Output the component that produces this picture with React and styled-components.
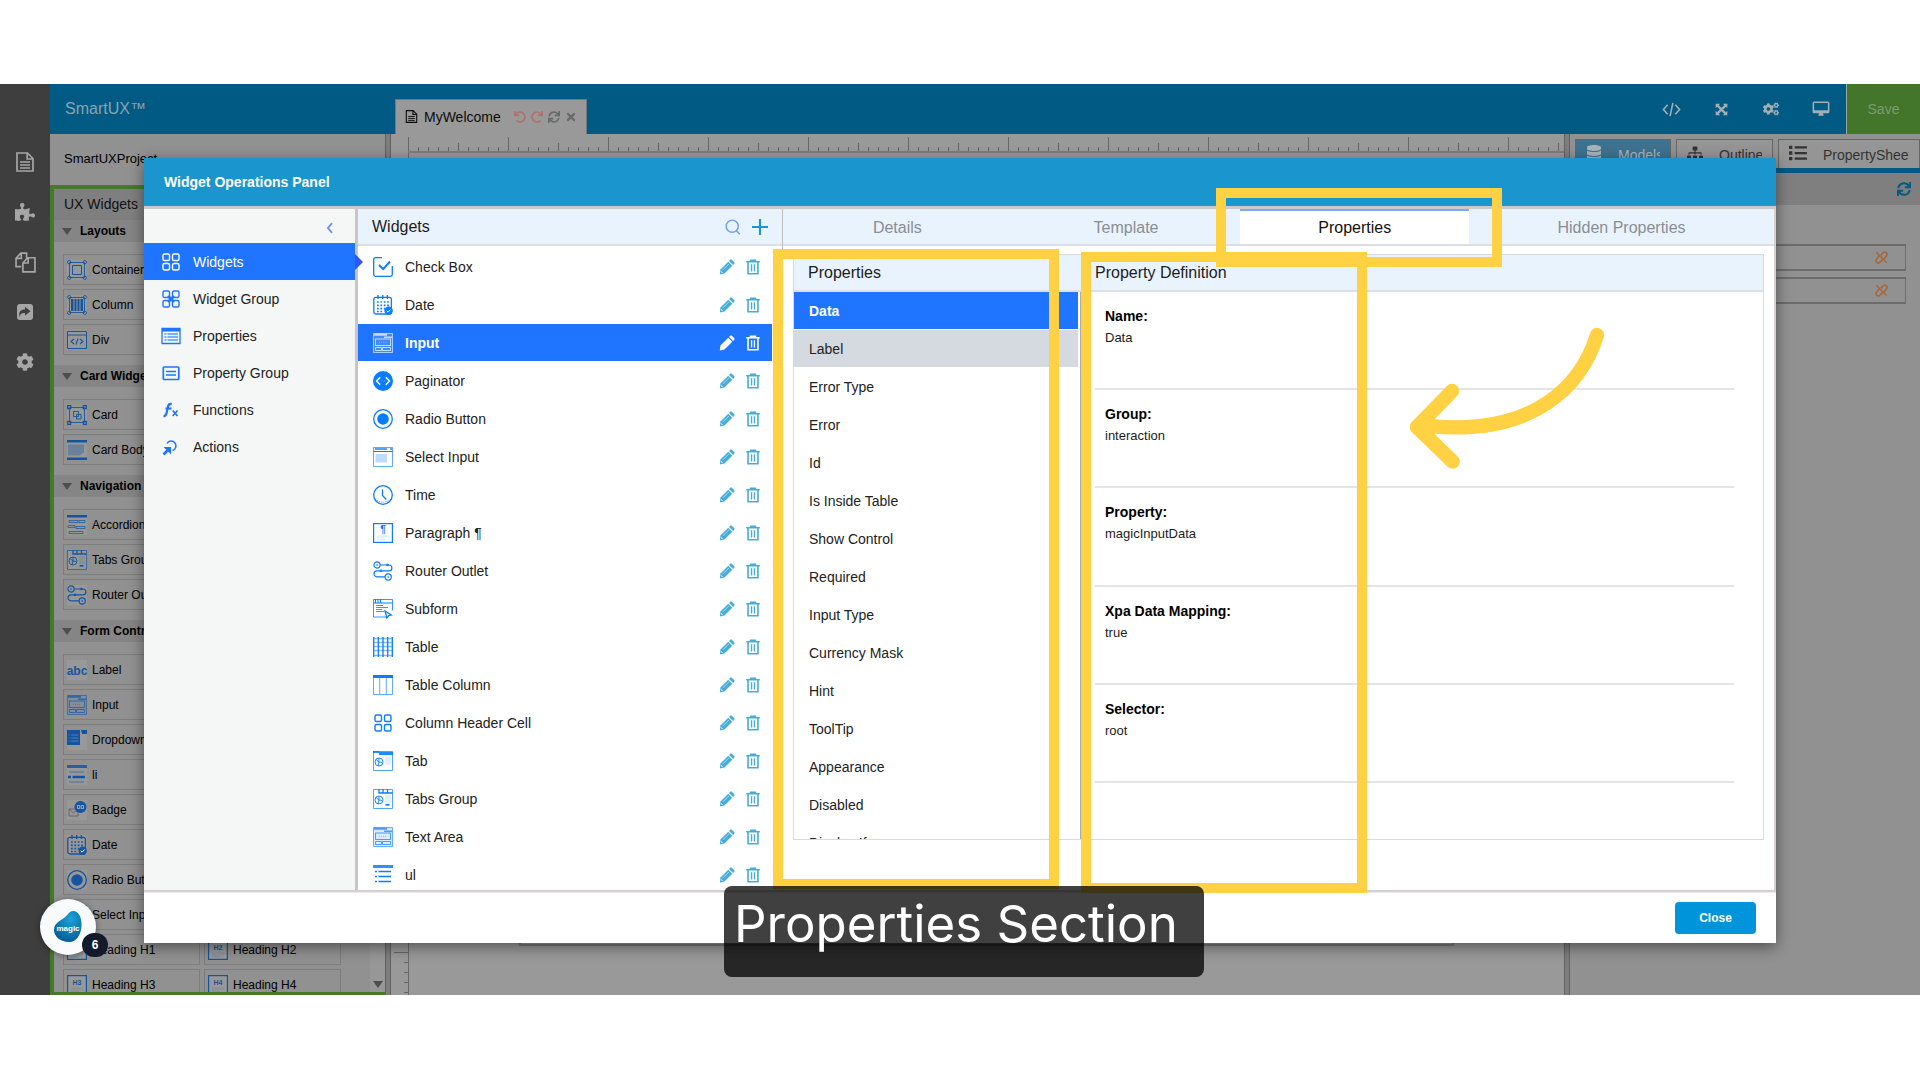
import React from 'react';
import styled, { createGlobalStyle, css } from 'styled-components';
import { FaPuzzlePiece, FaCog, FaCogs, FaSync, FaTimes, FaSitemap, FaDatabase, FaList, FaUndo, FaRedo } from 'react-icons/fa';

const BLUE = '#1f75ff';
const YELLOW = '#ffd143';

const Global = createGlobalStyle`
  *, *::before, *::after { box-sizing: border-box; }
  body { margin: 0; background: #fff; color: #000; font: 14px/18px "Liberation Sans", Arial, sans-serif; }
  button, input { font: inherit; color: inherit; }
  button { border: 0; padding: 0; background: none; cursor: pointer; }
  h1, h2, h3, p, ul, dl, dd, dt { margin: 0; padding: 0; font: inherit; }
  ul { list-style: none; }
  svg { display: block; flex: none; }
`;

const Page = styled.div`
  height: 100vh;
  padding: 84px 0 85px;
  display: flex;
`;
const Stage = styled.div`
  position: relative;
  flex: 1;
  min-width: 0;
  display: flex;
  background: #919191;
`;
const Rail = styled.nav`
  flex: 0 0 50px;
  background: #3e3e3e;
  color: #a6a6a6;
  padding-top: 53px;
  display: flex;
  flex-direction: column;
`;
const RailButton = styled.button`
  height: 50px;
  display: grid;
  place-items: center;
`;
const Main = styled.div`
  flex: 1;
  min-width: 0;
  display: flex;
  flex-direction: column;
`;
const TopBar = styled.header`
  flex: 0 0 50px;
  display: flex;
  background: #005a84;
  color: #a3aeb3;
`;
const Brand = styled.h1`
  flex: 0 0 345px;
  padding: 0 15px;
  font-size: 16px;
  line-height: 49px;
  color: #8ba3ae;
`;
const FileTab = styled.div`
  align-self: flex-end;
  height: 35px;
  padding: 0 9px 1px;
  display: flex;
  align-items: center;
  border: 1px solid #6f7b80;
  border-bottom: 0;
  background: #999;
  color: #0c0c0c;
`;
const FileName = styled.span`
  padding: 0 13px 0 6px;
`;
const TabActions = styled.div`
  display: flex;
  gap: 5px;
  color: #686868;
`;
const TabAction = styled.button`
  color: ${(p) => (p.$faded ? '#ae7272' : 'inherit')};
`;
const Tools = styled.div`
  margin-left: auto;
  display: flex;
`;
const Tool = styled.button`
  width: 50px;
  display: grid;
  place-items: center;
`;
const Save = styled.button`
  width: 74px;
  border-left: 1px solid #9aa8a0;
  background: #43752b;
  color: #7c9c6c;
`;
const Work = styled.div`
  flex: 1;
  min-height: 0;
  display: flex;
`;
const Palette = styled.aside`
  flex: 0 0 335px;
  display: flex;
  flex-direction: column;
  background: #919191;
`;
const Project = styled.div`
  flex: 0 0 51px;
  padding: 0 14px;
  font-size: 13px;
  line-height: 50px;
`;
const PaletteBody = styled.div`
  flex: 1;
  min-height: 0;
  display: flex;
  flex-direction: column;
  border: solid #457a2c;
  border-width: 4px 0 3px 4px;
`;
const PaletteTitle = styled.h2`
  flex: 0 0 31px;
  padding: 0 10px;
  line-height: 31px;
  background: #7f7f7f;
  color: #111;
`;
const PaletteScroll = styled.div`
  flex: 1;
  min-height: 0;
  overflow: hidden;
  display: flex;
`;
const PaletteGroups = styled.div`
  flex: 1;
  min-width: 0;
  font-size: 12px;
`;
const PaletteTrack = styled.div`
  flex: 0 0 15px;
  background: #979797;
  display: flex;
  align-items: flex-end;
  justify-content: center;
  padding-bottom: 4px;
`;
const Caret = styled.span`
  border: 5px solid transparent;
  border-top: 7px solid #4d4d4d;
  border-bottom: 0;
`;
const GroupTitle = styled.h3`
  height: 22px;
  padding: 0 8px;
  display: flex;
  align-items: center;
  gap: 8px;
  background: #858585;
  font-weight: bold;
`;
const GroupGrid = styled.ul`
  padding: 12px 9px 10px;
  display: grid;
  gap: 4px;
`;
const GroupRow = styled.li`
  display: grid;
  grid-template-columns: 137px 137px;
  gap: 4px;
`;
const PaletteItem = styled.button`
  height: 31px;
  padding: 0 3px;
  display: flex;
  align-items: center;
  gap: 5px;
  border: 1px solid #7d7d7d;
  text-align: left;
  white-space: nowrap;
  svg { color: #15559f; background: #989898; }
`;
const Splitter = styled.div`
  flex: 0 0 6px;
  background: #7d7d7d;
  border: solid #626262;
  border-width: 0 1px;
`;
const Canvas = styled.section`
  flex: 1;
  min-width: 0;
  display: flex;
  flex-direction: column;
  background: #999;
`;
const tick = '#666';
const RulerTop = styled.div`
  flex: 0 0 19px;
  margin-left: 17px;
  border-bottom: 2px solid #7c7c7c;
  background:
    repeating-linear-gradient(90deg, ${tick} 0 1px, transparent 1px 100px) 0 3px / 100% 14px no-repeat,
    repeating-linear-gradient(90deg, ${tick} 0 1px, transparent 1px 50px) 0 9px / 100% 8px no-repeat,
    repeating-linear-gradient(90deg, ${tick} 0 1px, transparent 1px 10px) 0 13px / 100% 4px no-repeat;
`;
const CanvasBody = styled.div`
  flex: 1;
  display: flex;
`;
const RulerLeft = styled.div`
  flex: 0 0 18px;
  border-right: 1px solid #6a6a6a;
  background:
    repeating-linear-gradient(180deg, transparent 0 99px, ${tick} 99px 100px) 3px 0 / 14px 100% no-repeat,
    repeating-linear-gradient(180deg, transparent 0 9px, ${tick} 9px 10px) 13px 0 / 4px 100% no-repeat;
`;
const Artboard = styled.div`
  flex: 1;
  margin: 16px 110px 49px;
  border: 2px solid #7a7a7a;
`;
const Inspector = styled.aside`
  flex: 0 0 350px;
  min-width: 0;
  background: #919191;
`;
const InspectorTabs = styled.div`
  padding: 5px 0 0 5px;
  display: grid;
  grid-template-columns: 96px 97px minmax(0, 1fr);
  gap: 5px;
  border-bottom: 5px solid #005a84;
`;
const InspectorTab = styled.button`
  min-width: 0;
  height: 29px;
  padding: 2px 10px 0;
  display: flex;
  align-items: center;
  gap: 16px;
  border: 1px solid #666;
  border-bottom: 0;
  background: ${(p) => (p.$active ? '#3f7290' : '#959595')};
  color: ${(p) => (p.$active ? '#a8b4bb' : '#333')};
  span { overflow: hidden; }
  svg { margin-bottom: 4px; }
`;
const InspectorBar = styled.div`
  height: 32px;
  padding: 0 9px;
  display: flex;
  align-items: center;
  justify-content: flex-end;
  background: #7f7f7f;
  color: #005a84;
`;
const Fields = styled.div`
  padding: 39px 14px 0 5px;
  display: grid;
  gap: 6px;
`;
const Field = styled.label`
  height: 27px;
  padding-right: 17px;
  display: flex;
  align-items: center;
  border: 1px solid #6c6c6c;
  border-width: 2px 1px;
  color: #a5683a;
  input { flex: 1; min-width: 0; border: 0; background: none; }
`;

const Modal = styled.section`
  position: absolute;
  inset: 74px 144px 52px;
  display: flex;
  flex-direction: column;
  background: #fff;
  box-shadow: 0 4px 14px rgba(0, 0, 0, 0.45);
`;
const ModalTitle = styled.h2`
  flex: 0 0 51px;
  padding: 0 20px;
  border-bottom: 3px solid #cdc8c9;
  background: #1a95ce;
  color: #fff;
  font-weight: bold;
  line-height: 48px;
`;
const ModalBody = styled.div`
  flex: 1;
  min-height: 0;
  display: flex;
  border: solid #d5cfd0;
  border-width: 0 2px 2px 0;
`;
const SideNav = styled.nav`
  flex: 0 0 214px;
  border-right: 3px solid #cac4c5;
  background: #f4f7f6;
`;
const CollapseRow = styled.div`
  height: 34px;
  padding: 4px 18px 0 0;
  display: flex;
  align-items: center;
  justify-content: flex-end;
  color: #6f8df5;
`;
const NavItem = styled.button`
  position: relative;
  width: 100%;
  height: 37px;
  padding-left: 17px;
  display: flex;
  align-items: center;
  gap: 12px;
  text-align: left;
  color: #222;
  svg { color: ${BLUE}; }
  ${(p) => p.$active && css`
    background: ${BLUE};
    color: #fff;
    svg { color: #fff; }
    &::after {
      content: '';
      position: absolute;
      left: 100%;
      top: 11px;
      border: 8px solid transparent;
      border-left-color: #2f55ff;
      border-right-width: 0;
    }
  `}
`;
const WidgetColumn = styled.section`
  flex: 0 0 425px;
  display: flex;
  flex-direction: column;
  border-right: 1px solid #bdbdbd;
`;
const barStyle = css`
  flex: none;
  height: 37px;
  border-bottom: 2px solid #dcdfe3;
  background: #e9f3fe;
  font-size: 16px;
  color: #1c1c1c;
`;
const WidgetBar = styled.header`
  ${barStyle}
  padding: 0 14px;
  display: flex;
  align-items: center;
  gap: 11px;
  h3 { flex: 1; }
`;
const BarAction = styled.button`
  color: ${(p) => (p.$strong ? '#1a95ce' : '#6aa0f0')};
`;
const WidgetList = styled.ul`
  flex: 1;
  min-height: 0;
  overflow: hidden;
  padding: 2px 10px 0 0;
`;
const WidgetRow = styled.li`
  height: 37px;
  margin-bottom: 1px;
  padding: 0 11px 0 15px;
  display: flex;
  align-items: center;
  background: ${(p) => (p.$active ? BLUE : 'transparent')};
  color: ${(p) => (p.$active ? '#fff' : '#0a7cff')};
`;
const WidgetName = styled.button`
  flex: 1;
  padding-left: 12px;
  text-align: left;
  color: ${(p) => (p.$active ? '#fff' : '#222')};
  font-weight: ${(p) => (p.$active ? 'bold' : 'normal')};
`;
const RowAction = styled.button`
  margin-left: 10px;
  color: ${(p) => (p.$active ? '#fff' : '#46add9')};
`;
const Detail = styled.section`
  flex: 1;
  min-width: 0;
  display: flex;
  flex-direction: column;
`;
const Tabs = styled.div`
  ${barStyle}
  display: grid;
  grid-template-columns: 3fr 3fr 3fr 4fr;
`;
const Tab = styled.button`
  border-top: 2px solid ${(p) => (p.$active ? '#7ba9f5' : 'transparent')};
  background: ${(p) => (p.$active ? '#fff' : 'transparent')};
  color: ${(p) => (p.$active ? '#111' : '#8a8e92')};
`;
const PanelWrap = styled.div`
  flex: 1;
  min-height: 0;
  padding: 8px 10px 50px;
  display: flex;
`;
const Panel = styled.div`
  flex: 1;
  min-width: 0;
  display: grid;
  grid-template-columns: 287px 1fr;
  grid-template-rows: auto 1fr;
  border: 1px solid #d8dade;
`;
const PanelTitle = styled.h3`
  ${barStyle}
  padding: 0 14px;
  line-height: 35px;
`;
const PropertyList = styled.ul`
  min-height: 0;
  overflow: hidden;
  padding-right: 2px;
  border-right: 1px solid #aaa;
`;
const PropertyRow = styled.button`
  width: 100%;
  height: 37px;
  margin-bottom: 1px;
  padding: 0 15px;
  display: block;
  text-align: left;
  background: ${(p) => (p.$active ? BLUE : p.$hover ? '#d5d9e0' : 'transparent')};
  color: ${(p) => (p.$active ? '#fff' : '#222')};
  font-weight: ${(p) => (p.$active ? 'bold' : 'normal')};
`;
const Definitions = styled.dl`
  min-height: 0;
  padding: 0 29px 56px 14px;
  display: flex;
  flex-direction: column;
`;
const Definition = styled.div`
  flex: 1;
  padding: 13px 10px 0;
  border-bottom: 2px solid #e4e4e4;
  dt { font-weight: bold; line-height: 22px; }
  dd { font-size: 13px; line-height: 22px; color: #1c1c1c; }
`;
const ModalFooter = styled.footer`
  flex: 0 0 51px;
  padding: 0 20px;
  display: flex;
  align-items: center;
  justify-content: flex-end;
  border-top: 1px solid #ececec;
`;
const CloseButton = styled.button`
  width: 81px;
  height: 32px;
  border-radius: 4px;
  background: #0095da;
  color: #fff;
  font-size: 12px;
  font-weight: bold;
`;

const Highlight = styled.div`
  position: absolute;
  left: ${(p) => p.$x}px;
  top: ${(p) => p.$y}px;
  width: 286px;
  height: ${(p) => p.$h}px;
  border: 10px solid ${YELLOW};
  pointer-events: none;
`;
const Pointer = styled.svg`
  position: absolute;
  left: 1380px;
  top: 226px;
`;
const Caption = styled.p`
  position: absolute;
  left: 724px;
  top: 802px;
  width: 480px;
  height: 91px;
  padding-left: 10px;
  border-radius: 8px;
  background: rgba(0, 0, 0, 0.75);
  color: #fff;
  font: 51px/76px Inter, sans-serif;
`;
const Chat = styled.button`
  position: absolute;
  left: 40px;
  top: 815px;
  width: 56px;
  height: 56px;
  border-radius: 50%;
  display: grid;
  place-items: center;
  background: #f9fafc;
  box-shadow: 0 1px 6px rgba(0, 0, 0, 0.4);
`;
const ChatCount = styled.span`
  position: absolute;
  left: 42px;
  top: 34px;
  width: 26px;
  height: 24px;
  border-radius: 12px;
  background: #121a2b;
  color: #fff;
  font-size: 12px;
  font-weight: bold;
  line-height: 24px;
`;

const S = { fill: 'none', stroke: 'currentColor' };
const F = { fill: 'currentColor' };
const squares = (r = 1.6) => (
  <g {...S} strokeWidth="1.4">
    {[[2, 2], [11.5, 2], [2, 11.5], [11.5, 11.5]].map(([x, y]) => (
      <rect key={`${x}-${y}`} x={x} y={y} width="6.5" height="6.5" rx={r} />
    ))}
  </g>
);
const heading = (t, size = 7) => (
  <g>
    <rect x=".6" y=".6" width="18.8" height="18.8" {...S} strokeWidth="1.2" />
    <text x="10" y="10" fontSize={size} fontWeight="bold" textAnchor="middle" {...F}>{t}</text>
    <path d="M4 12.5h12v2H4zM4 15.5h8v2H4z" {...F} opacity=".12" />
  </g>
);
const form = (
  <g>
    <path d="M.5 .5h19v19H.5z" {...F} opacity=".15" />
    <path d="M.5 .5h19v19H.5z" {...S} opacity=".6" />
    <path d="M1 .8h13v2H1zM11 3.6h8v1.4h-8z" {...F} opacity=".7" />
    <rect x="2.5" y="6" width="15" height="6.5" {...S} opacity=".7" />
    <path d="M6 9.3h8" {...S} strokeDasharray="1 1" opacity=".4" />
    <path d="M2.5 14.5h6v3h-6zM9.5 14.5h8v3h-8z" {...S} opacity=".7" />
  </g>
);
const tabWin = (
  <g>
    <path d="M.5 .5h19v19H.5z" {...S} opacity=".7" />
    <circle cx="6" cy="11" r="4" {...S} strokeWidth=".9" />
    <path d="M3 8.5l3 2.5 3 .5M6 11l-1 4M6 11V7" {...S} strokeWidth=".9" />
    <path d="M12 6h6v8h-6z" {...F} opacity=".12" />
  </g>
);
const frame = (
  <g {...S} strokeWidth=".9">
    <path d="M2.5 2.5h15v15h-15z" />
    {[[2.2, 2.2], [17.8, 2.2], [2.2, 17.8], [17.8, 17.8]].map(([x, y]) => (
      <circle key={`${x}-${y}`} cx={x} cy={y} r="1.7" />
    ))}
  </g>
);

const glyphs = {
  check: (
    <g {...S} strokeWidth="1.3">
      <path d="M9 .7H2.5Q.7 .7 .7 2.5V17.5Q.7 19.3 2.5 19.3H17.5Q19.3 19.3 19.3 17.5V9" />
      <path d="M6 8l4.2 4.2L17 4.5" strokeWidth="1.9" />
    </g>
  ),
  date: (
    <g>
      <rect x=".8" y="2.4" width="17.6" height="16.6" rx="2" {...S} strokeWidth="1.3" />
      <path d="M5 0v4M9.7 0v4M14.4 0v4" {...S} strokeWidth="1.4" />
      <path d="M4 7h12M4 10.3h12M4 13.6h8M4 16.5h6" {...S} strokeWidth="1.7" strokeDasharray="1.7 1.7" />
      <circle cx="15.6" cy="15.8" r="4.2" {...F} />
      <path d="M13.7 15.8l1.4 1.4 2.5-2.7" fill="none" stroke="#fff" strokeWidth="1" />
    </g>
  ),
  form,
  code: (
    <g>
      <circle cx="10" cy="10" r="10" {...F} />
      <path d="M7.2 6.2L3.5 10l3.7 3.8M12.8 6.2L16.5 10l-3.7 3.8" fill="none" stroke="#fff" strokeWidth="1.4" />
      <path d="M8.5 10h.8M10.8 10h.8" stroke="#fff" opacity=".6" />
    </g>
  ),
  radio: (
    <g>
      <circle cx="10" cy="10" r="9.3" {...S} strokeWidth="1.3" />
      <circle cx="10" cy="10" r="5.8" {...F} />
    </g>
  ),
  select: (
    <g>
      <path d="M.5 .5h19v19H.5z" {...S} opacity=".65" />
      <path d="M.5 4.5h19" {...S} />
      <path d="M2 1h12v2H2zM17 1h2v2h-2z" {...F} opacity=".7" />
      <path d="M2.5 7h11.5v8.5H2.5z" {...F} opacity=".28" />
    </g>
  ),
  time: (
    <g {...S}>
      <circle cx="10" cy="10" r="9.3" strokeWidth="1.3" />
      <path d="M9.5 4.5v6l3.8 4" strokeWidth="1.3" />
      <path d="M4 15.5q6 3.5 12 0" strokeWidth=".8" strokeDasharray="1 1" />
    </g>
  ),
  para: heading('¶', 10),
  h1: heading('H1'),
  h2: heading('H2'),
  h3: heading('H3'),
  h4: heading('H4'),
  router: (
    <g {...S} strokeWidth="1.2">
      <circle cx="4" cy="4" r="3.1" />
      <circle cx="15.2" cy="16" r="3.1" />
      <path d="M7.2 4H16a2.9 2.9 0 0 1 0 5.8H4a3 3 0 0 0 0 6h8" />
      <path d="M4 3v2M15.2 15v2" strokeWidth="1" />
      <circle cx="14.5" cy="4" r=".7" />
      <circle cx="8" cy="9.8" r=".7" />
    </g>
  ),
  subform: (
    <g>
      <path d="M14 18H.5V.5h19v11" {...S} opacity=".8" />
      <path d="M.5 4h19M2.5 0v4M5 0v4M7.5 0v4" {...S} strokeWidth="1" />
      <path d="M3 6.5h7M3 8.5h12M3 10.5h6M3 12.5h8" {...S} strokeWidth="1" opacity=".8" />
      <path d="M12 12l6.5 4-2.8.7-1.8 2.3z" fill="#fff" stroke="currentColor" strokeWidth="1.3" />
    </g>
  ),
  table: (
    <g>
      <path d="M0 1.5h20M0 5.5h20M0 9.5h20M0 13.5h20M0 18.5h20" {...S} strokeWidth="1.4" opacity=".5" />
      <path d="M.7 0v20M5.3 0v20M10 0v20M14.7 0v20M19.3 0v20" {...S} strokeWidth="1.3" />
    </g>
  ),
  tablecol: (
    <g>
      <path d="M0 0h20v3H0z" {...F} />
      <path d="M.5 3v16.5h19V3M6.7 3v16M13.3 3v16" {...S} opacity=".65" />
    </g>
  ),
  grid4: squares(),
  group4: (
    <g>
      {squares(1.6)}
      <path d="M7 7l6 6M13 7l-6 6" {...S} strokeWidth="2.4" />
      <path d="M10 7.5v5M7.500 10h5" {...S} strokeWidth="1.4" />
    </g>
  ),
  tab: <g>{tabWin}<path d="M0 0h6v2H0zM6 1h14v3H6z" {...F} opacity=".9" /></g>,
  tabs: <g>{tabWin}<path d="M6 0v4h13.5M10 0v4M14.5 0v4" {...S} strokeWidth="1.3" /><path d="M12.5 15h4v1.6h-4z" {...F} /></g>,
  ul: (
    <g>
      <path d="M0 0h20v3H0z" {...F} opacity=".85" />
      <path d="M2 6.5h2M2 11.5h2M2 16.5h2M5.5 6.5h12.5M5.5 11.5h12.5M5.5 16.5h12.5" {...S} strokeWidth="1.7" />
    </g>
  ),
  li: (
    <g>
      <path d="M0 0h20v3H0z" {...F} opacity=".85" />
      <path d="M2 7h15M2 17h15" {...S} strokeWidth="1.5" opacity=".4" />
      <path d="M1 12h3M5.5 12h12.5" {...S} strokeWidth="2.5" />
    </g>
  ),
  container: <g>{frame}<path d="M5.5 5.5h9v9h-9z" {...S} /></g>,
  column: <g>{frame}<path d="M4 4h2.5v12H4zM7.5 4h2v12h-2zM10.5 4h2v12h-2zM13.5 4H16v12h-2.5z" {...F} /></g>,
  div: (
    <g {...S}>
      <path d="M.5 1.5h19v17H.5zM.5 5h19" />
      <path d="M7 9l-3 2.5L7 14M13 9l3 2.5-3 2.5M11 8.5l-2 6" strokeWidth="1.1" />
    </g>
  ),
  card: (
    <g {...S} strokeWidth=".9">
      <path d="M2.5 2.5h15v15h-15z" />
      <path d="M.7 .7h3v3h-3zM16.3 .7h3v3h-3zM.7 16.3h3v3h-3zM16.3 16.3h3v3h-3z" strokeWidth="1.3" />
      <path d="M6.5 6.5h5v5h-5zM9.5 9.5h4.5v4.5H9.5z" />
    </g>
  ),
  cardbody: (
    <g>
      <path d="M0 0h20v2.5H0zM0 17.5h20V20H0z" {...F} />
      <path d="M1 4.5h16v8l-5 3H1z" {...F} opacity=".35" />
    </g>
  ),
  accordion: (
    <g>
      <path d="M0 0h20v2.5H0z" {...F} />
      <path d="M2 5.5h9v2H2zM12 5.500h6v2h-6zM1 10.500h7v2H1zM9 11.500h9v2H9zM2 16.500h14v2H2z" {...S} strokeWidth=".9" opacity=".8" />
    </g>
  ),
  abc: <text x="10" y="15" fontSize="12" fontWeight="bold" textAnchor="middle" {...F}>abc</text>,
  dropdown: (
    <g>
      <path d="M0 0h13v15H0zM14 0h6v4h-5z" {...F} />
      <path d="M1.5 5h1M4 5h7.5M1.5 8h1M4 8h7.5M1.5 11h1M4 11h7.5" stroke="#6f93bd" strokeWidth=".7" />
    </g>
  ),
  badge: (
    <g>
      <path d="M2 9h9v7H2zM2 9l4.5 4L11 9" fill="none" stroke="#666" />
      <circle cx="13.5" cy="7" r="6" {...F} />
      <path d="M10.5 5.5h2.3v3h-2.3zM14.3 5.5h2.3v3h-2.3z" fill="none" stroke="#9fb4cc" strokeWidth=".9" />
    </g>
  ),
  propwin: (
    <g>
      <path d="M1 2.5h18v15H1z" {...S} strokeWidth="1.3" />
      <path d="M1 2h18v3.5H1z" {...F} />
      <path d="M3.5 8h2M3.5 11h2M3.5 14h2M6.5 8h10.5M6.5 11h10.5M6.5 14h10.5" {...S} strokeWidth="1.4" opacity=".75" />
    </g>
  ),
  propgroup: (
    <g>
      <rect x="2.3" y="4" width="15.5" height="12.5" rx=".8" {...S} strokeWidth="1.7" />
      <path d="M5 8.500h10M5 12h10" {...S} strokeWidth="1.4" />
    </g>
  ),
  fx: (
    <g {...S} strokeWidth="2.2">
      <path d="M2.500 16q2.500 .3 3.200-3.500l1.300-6Q7.700 3.500 10.800 4M4.500 8.500h6" />
      <path d="M11.700 10.500l4.800 5.500M16.500 10.500l-4.800 5.500" strokeWidth="1.600" />
    </g>
  ),
  action: (
    <g {...S}>
      <path d="M6 6.500a4.800 4.800 0 1 1 5.500 7" strokeWidth="1.500" />
      <path d="M2.500 17.500l6-6" strokeWidth="2.600" />
      <path d="M2.500 10h7.500v7.500z" {...F} stroke="none" />
    </g>
  ),
  doc: (
    <g {...S} strokeWidth="1.7">
      <path d="M2 1h10.5L18 6.5V19H2zM12.2 1v6H18" />
      <path d="M5 10h10M5 13h10M5 16h10" strokeWidth="1.4" />
    </g>
  ),
  files: (
    <g {...S} strokeWidth="1.6">
      <path d="M6 14H1V6l4.5-5H11v5M1 6h5V1" />
      <path d="M7.5 19V10.5L12 5.5h7V19zM7.5 10.5h5v-5" />
    </g>
  ),
  share: (
    <g>
      <rect x="2" y="2" width="16" height="16" rx="3" {...F} />
      <path d="M4.8 15.5C3 9.5 6 7.5 10 7.5V4.8l5.5 4.4-5.5 4.4V11C7 11 5 11.5 4.8 15.5z" fill="#3e3e3e" />
    </g>
  ),
  code2: <path d="M6 5L1.5 10 6 15M14 5l4.5 5-4.5 5M11.5 3l-3 14" {...S} strokeWidth="1.7" />,
  arrows: (
    <g>
      <path d="M4 4l12 12M16 4L4 16" {...S} strokeWidth="3.4" />
      <path d="M1 1h7L1 8zM19 1v7l-7-7zM1 19v-7l7 7zM19 19h-7l7-7z" {...F} />
    </g>
  ),
  screen: (
    <g>
      <rect x="1.5" y="2.5" width="17" height="11.5" rx="1" {...S} strokeWidth="1.7" />
      <path d="M1.5 11.5h17v2.5h-17zM8 14h4l1 3.5H7z" {...F} />
    </g>
  ),
  unlink: (
    <g {...S} strokeWidth="2.4">
      <path d="M8.500 7l3.500-4a3.600 3.600 0 0 1 5.500 4.700L13 13" />
      <path d="M11.500 13l-3.500 4a3.600 3.600 0 0 1-5.500-4.700L7 7" />
      <path d="M2 2l16 16" strokeWidth="2" />
    </g>
  ),
  pencil: (
    <g>
      <path d="M1.8 13.2L11.6 3.4l5 5L6.8 18.2 1 19.4z" {...F} />
      <path d="M12.6 2.4l1.4-1.4q1-1 2-.2l3.2 3.2q.8 1-.2 2l-1.4 1.4z" {...F} />
      <path d="M5 13.5l7.5-7.5" stroke="#fff" strokeWidth="1" opacity=".7" />
      <path d="M2.5 15.5l2 2" stroke="#fff" strokeWidth="1.3" opacity=".8" />
    </g>
  ),
  trash: (
    <g {...S} strokeWidth="2">
      <path d="M1.500 3.500h17M7 3V1.500h6V3M3.800 4v14.500h12.400V4" />
      <path d="M8.200 6.500v9M11.800 6.500v9" strokeWidth="1.700" />
    </g>
  ),
  search: (
    <g {...S} strokeWidth="1.8">
      <circle cx="9" cy="9" r="7.6" />
      <path d="M14 14.5l4.5 4.5" />
    </g>
  ),
  plus: <path d="M10 0v20M0 10h20" {...S} strokeWidth="2.6" />,
  chevron: <path d="M13 3l-6 7 6 7" {...S} strokeWidth="2.6" />,
};

const Icon = ({ name, size = 20 }) => (
  <svg width={size} height={size} viewBox="0 0 20 20" aria-hidden="true">{glyphs[name]}</svg>
);

const paletteGroups = [
  { title: 'Layouts', rows: [[['container', 'Container']], [['column', 'Column']], [['div', 'Div']]] },
  { title: 'Card Widgets', rows: [[['card', 'Card']], [['cardbody', 'Card Body']]] },
  { title: 'Navigation', rows: [[['accordion', 'Accordion']], [['tabs', 'Tabs Group']], [['router', 'Router Outlet']]] },
  {
    title: 'Form Controls',
    rows: [
      [['abc', 'Label']], [['form', 'Input']], [['dropdown', 'Dropdown']], [['li', 'li']], [['badge', 'Badge']],
      [['date', 'Date']], [['radio', 'Radio Button']], [['select', 'Select Input']],
      [['h1', 'Heading H1'], ['h2', 'Heading H2']], [['h3', 'Heading H3'], ['h4', 'Heading H4']],
    ],
  },
];
const navItems = [
  ['grid4', 'Widgets'], ['group4', 'Widget Group'], ['propwin', 'Properties'],
  ['propgroup', 'Property Group'], ['fx', 'Functions'], ['action', 'Actions'],
];
const widgets = [
  ['check', 'Check Box'], ['date', 'Date'], ['form', 'Input'], ['code', 'Paginator'], ['radio', 'Radio Button'],
  ['select', 'Select Input'], ['time', 'Time'], ['para', 'Paragraph ¶'], ['router', 'Router Outlet'],
  ['subform', 'Subform'], ['table', 'Table'], ['tablecol', 'Table Column'], ['grid4', 'Column Header Cell'],
  ['tab', 'Tab'], ['tabs', 'Tabs Group'], ['form', 'Text Area'], ['ul', 'ul'],
];
const properties = [
  'Data', 'Label', 'Error Type', 'Error', 'Id', 'Is Inside Table', 'Show Control', 'Required',
  'Input Type', 'Currency Mask', 'Hint', 'ToolTip', 'Appearance', 'Disabled', 'Display If',
];
const definitions = [
  ['Name:', 'Data'], ['Group:', 'interaction'], ['Property:', 'magicInputData'],
  ['Xpa Data Mapping:', 'true'], ['Selector:', 'root'],
];

const WidgetPalette = () => (
  <Palette>
    <Project>SmartUXProject</Project>
    <PaletteBody>
      <PaletteTitle>UX Widgets</PaletteTitle>
      <PaletteScroll>
        <PaletteGroups>
          {paletteGroups.map((g) => (
            <section key={g.title}>
              <GroupTitle><Caret />{g.title}</GroupTitle>
              <GroupGrid>
                {g.rows.map((row) => (
                  <GroupRow key={row[0][1]}>
                    {row.map(([icon, label]) => (
                      <PaletteItem key={label}><Icon name={icon} />{label}</PaletteItem>
                    ))}
                  </GroupRow>
                ))}
              </GroupGrid>
            </section>
          ))}
        </PaletteGroups>
        <PaletteTrack><Caret /></PaletteTrack>
      </PaletteScroll>
    </PaletteBody>
  </Palette>
);

const OperationsPanel = () => (
  <Modal role="dialog" aria-label="Widget Operations Panel">
    <ModalTitle>Widget Operations Panel</ModalTitle>
    <ModalBody>
      <SideNav>
        <CollapseRow><button aria-label="Collapse"><Icon name="chevron" size={14} /></button></CollapseRow>
        {navItems.map(([icon, label], i) => (
          <NavItem key={label} $active={i === 0}><Icon name={icon} />{label}</NavItem>
        ))}
      </SideNav>
      <WidgetColumn>
        <WidgetBar>
          <h3>Widgets</h3>
          <BarAction aria-label="Search"><Icon name="search" size={16} /></BarAction>
          <BarAction $strong aria-label="Add"><Icon name="plus" size={16} /></BarAction>
        </WidgetBar>
        <WidgetList>
          {widgets.map(([icon, label]) => {
            const active = label === 'Input';
            return (
              <WidgetRow key={label} $active={active}>
                <Icon name={icon} />
                <WidgetName $active={active}>{label}</WidgetName>
                <RowAction $active={active} aria-label={`Edit ${label}`}><Icon name="pencil" size={16} /></RowAction>
                <RowAction $active={active} aria-label={`Delete ${label}`}><Icon name="trash" size={16} /></RowAction>
              </WidgetRow>
            );
          })}
        </WidgetList>
      </WidgetColumn>
      <Detail>
        <Tabs role="tablist">
          {['Details', 'Template', 'Properties', 'Hidden Properties'].map((t) => (
            <Tab key={t} role="tab" $active={t === 'Properties'}>{t}</Tab>
          ))}
        </Tabs>
        <PanelWrap>
          <Panel>
            <PanelTitle>Properties</PanelTitle>
            <PanelTitle>Property Definition</PanelTitle>
            <PropertyList>
              {properties.map((p, i) => (
                <li key={p}><PropertyRow $active={i === 0} $hover={i === 1}>{p}</PropertyRow></li>
              ))}
            </PropertyList>
            <Definitions>
              {definitions.map(([k, v]) => (
                <Definition key={k}><dt>{k}</dt><dd>{v}</dd></Definition>
              ))}
            </Definitions>
          </Panel>
        </PanelWrap>
      </Detail>
    </ModalBody>
    <ModalFooter><CloseButton>Close</CloseButton></ModalFooter>
  </Modal>
);

export default function App() {
  return (
    <Page>
      <Global />
      <Stage>
        <Rail>
          <RailButton aria-label="Documents"><Icon name="doc" /></RailButton>
          <RailButton aria-label="Extensions"><FaPuzzlePiece size={20} /></RailButton>
          <RailButton aria-label="Copies"><Icon name="files" size={21} /></RailButton>
          <RailButton aria-label="Share"><Icon name="share" /></RailButton>
          <RailButton aria-label="Settings"><FaCog size={18} /></RailButton>
        </Rail>
        <Main>
          <TopBar>
            <Brand>SmartUX™</Brand>
            <FileTab>
              <Icon name="doc" size={13} />
              <FileName>MyWelcome</FileName>
              <TabActions>
                <TabAction $faded aria-label="Undo"><FaUndo size={12} /></TabAction>
                <TabAction $faded aria-label="Redo"><FaRedo size={12} /></TabAction>
                <TabAction aria-label="Reload"><FaSync size={12} /></TabAction>
                <TabAction aria-label="Close file"><FaTimes size={12} /></TabAction>
              </TabActions>
            </FileTab>
            <Tools>
              <Tool aria-label="Code"><Icon name="code2" size={19} /></Tool>
              <Tool aria-label="Expand"><Icon name="arrows" size={13} /></Tool>
              <Tool aria-label="Options"><FaCogs size={16} /></Tool>
              <Tool aria-label="Preview"><Icon name="screen" size={18} /></Tool>
              <Save>Save</Save>
            </Tools>
          </TopBar>
          <Work>
            <WidgetPalette />
            <Splitter />
            <Canvas>
              <RulerTop />
              <CanvasBody><RulerLeft /><Artboard /></CanvasBody>
            </Canvas>
            <Splitter />
            <Inspector>
              <InspectorTabs>
                <InspectorTab $active><FaDatabase size={16} /><span>Models</span></InspectorTab>
                <InspectorTab><FaSitemap size={16} /><span>Outline</span></InspectorTab>
                <InspectorTab><FaList size={18} /><span>PropertySheet</span></InspectorTab>
              </InspectorTabs>
              <InspectorBar><button aria-label="Refresh models"><FaSync size={14} /></button></InspectorBar>
              <Fields>
                <Field><input aria-label="First model" /><Icon name="unlink" size={13} /></Field>
                <Field><input aria-label="Second model" /><Icon name="unlink" size={13} /></Field>
              </Fields>
            </Inspector>
          </Work>
        </Main>
        <OperationsPanel />
        <Highlight $x={773} $y={165} $h={640} />
        <Highlight $x={1081} $y={168} $h={641} />
        <Highlight $x={1216} $y={104} $h={79} />
        <Pointer width="260" height="180" viewBox="0 0 780 540" fill="none" stroke={YELLOW} strokeWidth="43" strokeLinecap="round" strokeLinejoin="round">
          <path d="M651 75C605 225 465 375 160 349L111 351" />
          <path d="M216 243L111 351l107 104" />
        </Pointer>
        <Caption>Properties Section</Caption>
        <Chat aria-label="Open chat">
          <svg width="28" height="32" viewBox="0 0 28 32">
            <defs>
              <radialGradient id="drop" cx=".6" cy=".25" r=".8">
                <stop offset="0" stopColor="#1aa3d8" />
                <stop offset="1" stopColor="#015a94" />
              </radialGradient>
            </defs>
            <path d="M19 0c6 0 9 7 8.500 15S23 31 15 31 0 26 0 19 6 10 10 7 15 0 19 0z" fill="url(#drop)" />
            <text x="14" y="20" fontSize="8" fontWeight="bold" textAnchor="middle" fill="#fff">magic</text>
          </svg>
          <ChatCount>6</ChatCount>
        </Chat>
      </Stage>
    </Page>
  );
}
